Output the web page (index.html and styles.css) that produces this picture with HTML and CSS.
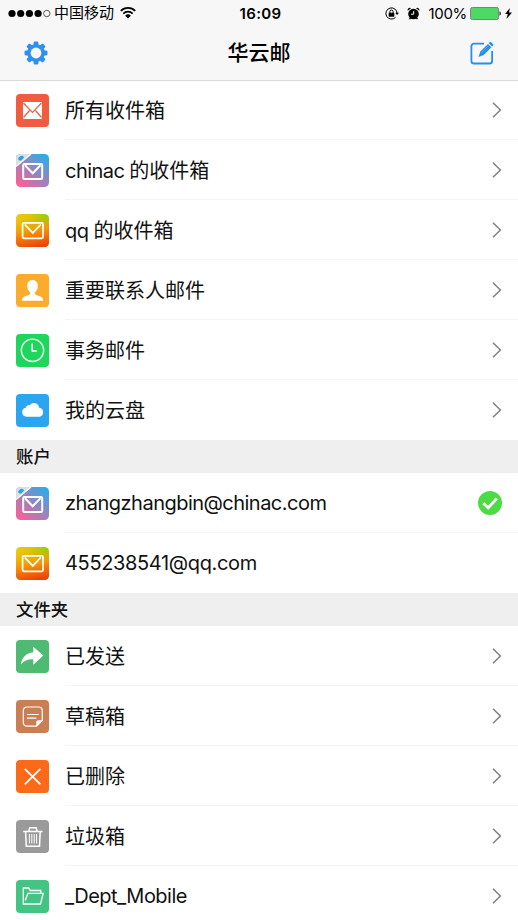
FILE: index.html
```html
<!DOCTYPE html>
<html lang="zh-CN">
<head>
<meta charset="utf-8">
<meta name="viewport" content="width=device-width, initial-scale=1">
<title>华云邮</title>
<link rel="stylesheet" href="styles.css">
</head>
<body>
<svg class="defs" width="0" height="0" aria-hidden="true">
  <defs>
    <linearGradient id="pinkblue" x1="0.1" y1="1" x2="0.9" y2="0">
      <stop offset="0" stop-color="#ff5e93"/><stop offset="0.5" stop-color="#9a83bd"/><stop offset="1" stop-color="#22b0ea"/>
    </linearGradient>
    <linearGradient id="sunbase" x1="0" y1="0" x2="1" y2="0">
      <stop offset="0" stop-color="#efc80c"/><stop offset="0.45" stop-color="#d9c60a"/><stop offset="1" stop-color="#7cd808"/>
    </linearGradient>
    <linearGradient id="sunfade" x1="0.4" y1="0" x2="0.6" y2="1">
      <stop offset="0.08" stop-color="#f5a800" stop-opacity="0"/><stop offset="0.5" stop-color="#f59a06"/><stop offset="1" stop-color="#ef4109"/>
    </linearGradient>
    <clipPath id="tile"><rect width="33" height="33" rx="4.5"/></clipPath>
    <symbol id="envelope" viewBox="0 0 33 33">
      <rect x="6.6" y="8.800" width="20.4" height="15.6" rx="1.3" fill="none" stroke="#fff" stroke-width="1.7"/>
      <path d="M8.8 10.500l8 8.400 8-8.400" fill="none" stroke="#fff" stroke-width="1.7"/>
    </symbol>
    <symbol id="chinac" viewBox="0 0 33 33">
      <g clip-path="url(#tile)">
        <rect width="33" height="33" fill="url(#pinkblue)"/>
        <path d="M0 0h14.500L0 12z" fill="#dedede"/>
        <path d="M15 0L0 12.500" stroke="#fff" stroke-width="1.3"/>
        <path d="M3 6.3a2 2 0 0 1 .4-3.400A2.700 2.700 0 0 1 8.100 3.500L5 6.800z" fill="#22a7ec"/>
      </g>
      <rect x="7.200" y="10" width="19" height="15" rx="1.300" fill="none" stroke="#fff" stroke-width="2"/>
      <path d="M9 11.300l7.700 7.900 7.700-7.900" fill="none" stroke="#fff" stroke-width="2"/>
    </symbol>
    <symbol id="qq" viewBox="0 0 33 33">
      <rect width="33" height="33" rx="4.5" fill="url(#sunbase)"/>
      <rect width="33" height="33" rx="4.5" fill="url(#sunfade)"/>
      <use href="#envelope"/>
    </symbol>
    <symbol id="chevron" viewBox="0 0 10 16">
      <path d="M1 .8L8.400 8 1 15.200" fill="none" stroke="#808080" stroke-width="1.500"/>
    </symbol>
  </defs>
</svg>
<div class="screen">
  <header class="top">
    <div class="status">
      <div class="carrier">
        <svg width="43" height="9" viewBox="0 0 43 9"><g><circle cx="4" cy="4.500" r="3.600"/><circle cx="12.700" cy="4.500" r="3.600"/><circle cx="21.400" cy="4.500" r="3.600"/><circle cx="30.100" cy="4.500" r="3.600"/></g><circle cx="38.800" cy="4.500" r="3.200" fill="none" stroke="#333" stroke-width=".8"/></svg>
        <span class="network">中国移动</span>
        <svg width="16" height="12" viewBox="0 0 16 12"><path d="M.8 3.900a10.300 10.300 0 0 1 14.400 0M3.300 6.600a6.700 6.700 0 0 1 9.400 0" fill="none" stroke="#000" stroke-width="1.700"/><path d="M5.200 8.700a4 4 0 0 1 5.600 0L8 11.500z"/></svg>
      </div>
      <div class="time">16:09</div>
      <div class="power">
        <svg width="14" height="13" viewBox="0 0 14 13"><path d="M12.100 6.500A5.600 5.600 0 1 0 10.500 10.400" fill="none" stroke="#000" stroke-width="1"/><path d="M10.200 5.700h3.800l-1.900 2.300z"/><rect x="3.700" y="5.700" width="5.600" height="4" rx=".4"/><path d="M4.900 6V4.600a1.600 1.600 0 0 1 3.200 0V6" fill="none" stroke="#000" stroke-width="1"/></svg>
        <svg class="alarm" width="13" height="13" viewBox="0 0 13 13"><circle cx="6.500" cy="7" r="5.300"/><path d="M.7 3.700A2.200 2.200 0 0 1 4 1.200zM9 1.200a2.200 2.200 0 0 1 3.300 2.500zM2.700 10.500l-.6 1.300.9.600 1.200-1zM10.300 10.500l.6 1.300-.9.600-1.200-1z"/><path d="M6.700 4v3.200H4" fill="none" stroke="#fff" stroke-width="1"/></svg>
        <span class="percent">100%</span>
        <svg width="31" height="13" viewBox="0 0 31 13"><rect x=".5" y=".5" width="28" height="12" rx="1.800" fill="#4cd964" stroke="#8b788b"/><path d="M29.500 4.300q1.400.5 1.400 2.200t-1.400 2.200z" fill="#222"/></svg>
        <svg class="bolt" width="7" height="11" viewBox="0 0 7 11"><path d="M4.900 0L0 6h2.800L1.400 11 7 4.500H4z"/></svg>
      </div>
    </div>
    <div class="nav">
      <svg width="24" height="24" viewBox="-12 -12 24 24"><g fill="#2d91ed"><g id="teeth"><rect x="-2.400" y="-11.500" width="4.800" height="23" rx="1.300"/><rect x="-11.500" y="-2.400" width="23" height="4.800" rx="1.300"/></g><use href="#teeth" transform="rotate(45)"/><circle r="8.900"/></g><circle r="5.400" fill="#f7f7f7"/></svg>
      <h1 class="title">华云邮</h1>
      <svg width="24" height="24" viewBox="0 0 24 24"><path d="M14 2.700H4A2.600 2.600 0 0 0 1.400 5.300v14.600a2.600 2.600 0 0 0 2.600 2.600h15.500a2.600 2.600 0 0 0 2.600-2.600V10" fill="none" stroke="#2191ee" stroke-width="1.800"/><g fill="#2191ee"><path d="M8.500 15.900l1.800-5.300 7.700-7.700 3.400 3.400-7.700 7.700z"/><path d="M18.700 2.200l1-1a1 1 0 0 1 1.400 0l2 2a1 1 0 0 1 0 1.400l-1 1z"/></g><path d="M11.300 11.900l7-7" stroke="#83c1f5" stroke-width=".6"/></svg>
    </div>
  </header>

  <ul class="list">
    <li class="row"><svg class="icon" viewBox="0 0 33 33"><rect width="33" height="33" rx="4" fill="#f15b40"/><rect x="7" y="8" width="19" height="17" rx="1" fill="#fff"/><path d="M7.500 9l9 9.300 9-9.300M7.500 23.500l6-7M25.500 23.500l-6-7" fill="none" stroke="#f15b40" stroke-width="1.200"/></svg><div class="body"><span class="label cjk">所有收件箱</span><svg class="chev"><use href="#chevron"/></svg></div></li>
    <li class="row"><svg class="icon"><use href="#chinac"/></svg><div class="body"><span class="label cjk"><span class="latin">chinac </span>的收件箱</span><svg class="chev"><use href="#chevron"/></svg></div></li>
    <li class="row"><svg class="icon"><use href="#qq"/></svg><div class="body"><span class="label cjk"><span class="latin">qq </span>的收件箱</span><svg class="chev"><use href="#chevron"/></svg></div></li>
    <li class="row"><svg class="icon" viewBox="0 0 33 33"><rect width="33" height="33" rx="4" fill="#fdab2b"/><path d="M16.500 6c3.400 0 5.300 2.500 5.300 6 0 2.700-1.100 4.700-2.700 6.300-.7 1.500.1 2.400 1.800 3 3.800 1.200 6 1.900 6.300 5.400H5.900c.3-3.500 2.500-4.200 6.300-5.400 1.700-.6 2.400-1.500 1.700-3-1.600-1.600-2.700-3.600-2.700-6.300 0-3.500 1.900-6 5.300-6z" fill="#fff"/></svg><div class="body"><span class="label cjk">重要联系人邮件</span><svg class="chev"><use href="#chevron"/></svg></div></li>
    <li class="row"><svg class="icon" viewBox="0 0 33 33"><rect width="33" height="33" rx="4" fill="#1ed65b"/><circle cx="16.500" cy="16.300" r="11.200" fill="none" stroke="#fff" stroke-width="1.300"/><path d="M16.200 9.500v7.600h4.600" fill="none" stroke="#fff" stroke-width="1.500"/></svg><div class="body"><span class="label cjk">事务邮件</span><svg class="chev"><use href="#chevron"/></svg></div></li>
    <li class="row"><svg class="icon" viewBox="0 0 33 33"><rect width="33" height="33" rx="4" fill="#2ca5f1"/><path d="M10.400 22.700a4.500 4.500 0 0 1-.6-8.900 3.300 3.300 0 0 1 4.200-2.700c2.500-3.700 8.500-2.300 9.200 2.600a4.600 4.600 0 0 1 .5 9z" fill="#fff"/></svg><div class="body"><span class="label cjk">我的云盘</span><svg class="chev"><use href="#chevron"/></svg></div></li>
  </ul>

  <h2 class="section">账户</h2>
  <ul class="list">
    <li class="row"><svg class="icon"><use href="#chinac"/></svg><div class="body"><span class="label address">zhangzhangbin@chinac.com</span><svg class="check" viewBox="0 0 24 24"><circle cx="12" cy="12" r="12" fill="#4cdb45"/><path d="M5.300 12.200l4.900 4.600 8.600-9.300" fill="none" stroke="#fff" stroke-width="2.800"/></svg></div></li>
    <li class="row"><svg class="icon"><use href="#qq"/></svg><div class="body"><span class="label digits">455238541@qq.com</span></div></li>
  </ul>

  <h2 class="section">文件夹</h2>
  <ul class="list">
    <li class="row"><svg class="icon" viewBox="0 0 33 33"><rect width="33" height="33" rx="4" fill="#4fba71"/><path d="M17.300 6.800l10 8.700-10 9.200v-5.300c-5-.3-9 .9-12.300 5.200.5-7.200 5.500-11.700 12.300-12.300z" fill="#fff"/></svg><div class="body"><span class="label cjk">已发送</span><svg class="chev"><use href="#chevron"/></svg></div></li>
    <li class="row"><svg class="icon" viewBox="0 0 33 33"><rect width="33" height="33" rx="4" fill="#ca7e52"/><path d="M20.500 26.200H10.800a3.500 3.500 0 0 1-3.500-3.500V10.500A3.500 3.500 0 0 1 10.800 7h12a3.500 3.500 0 0 1 3.500 3.500v9.900z" fill="none" stroke="#fff" stroke-width="1.200"/><path d="M20.300 26.500v-4.200q0-2 2-2h4.200z" fill="#fff"/><path d="M11 14.500h11.800M11 18.200h9.500" stroke="#fff" stroke-width="1.200"/></svg><div class="body"><span class="label cjk">草稿箱</span><svg class="chev"><use href="#chevron"/></svg></div></li>
    <li class="row"><svg class="icon" viewBox="0 0 33 33"><rect width="33" height="33" rx="4" fill="#fa6a19"/><path d="M8.800 8.800L24.400 24.400M24.400 8.800L8.800 24.400" stroke="#fff" stroke-width="1.800"/></svg><div class="body"><span class="label cjk">已删除</span><svg class="chev"><use href="#chevron"/></svg></div></li>
    <li class="row"><svg class="icon" viewBox="0 0 33 33"><rect width="33" height="33" rx="4" fill="#9a9a9a"/><path d="M7.200 11.500h19.300M9.600 12l.7 14.300h13.200l.7-14.300M12.800 11l1-3.200h6.300l1 3.200" fill="none" stroke="#fff" stroke-width="1.500"/><path d="M13.400 14v9.500M15.800 14v9.500M18.200 14v9.500M20.600 14v9.500" stroke="#fff" stroke-width="1"/></svg><div class="body"><span class="label cjk">垃圾箱</span><svg class="chev"><use href="#chevron"/></svg></div></li>
    <li class="row"><svg class="icon" viewBox="0 0 33 33"><rect width="33" height="33" rx="4" fill="#43c384"/><path d="M24.800 13.300v-2.800H14.200L12.700 8H7.300v16h17.200l2.700-10.700H12L9.200 20.500" fill="none" stroke="#fff" stroke-width="1.300"/></svg><div class="body"><span class="label address">_Dept_Mobile</span><svg class="chev"><use href="#chevron"/></svg></div></li>
  </ul>
</div>
</body>
</html>
```
FILE: styles.css
```css
* { box-sizing: border-box; }
body, ul, h1, h2 { margin: 0; padding: 0; }
body {
  background: #fff;
  color: #111;
  font-family: Inter, "Noto Sans CJK SC", sans-serif;
  overflow: hidden;
}
svg { display: block; flex: none; }
.defs { position: absolute; }
.screen { width: 518px; height: 920px; overflow: hidden; }
.top {
  height: 80px;
  background: #f7f7f7;
  box-shadow: 0 1px 0 #dadada;
}
.status {
  display: grid;
  grid-template-columns: 1fr auto 1fr;
  align-items: center;
  height: 26px;
  padding: 0 6px 0 8px;
  color: #000;
}
.carrier { display: flex; align-items: center; }
.network { margin: 0 6px 0 3px; font-size: 15px; line-height: 24px; }
.time { padding-left: 1px; font-size: 15px; font-weight: 600; letter-spacing: 0.4px; }
.power { display: flex; align-items: center; justify-content: flex-end; }
.alarm { margin-left: 8px; }
.percent { margin: 0 3px 0 8px; font-size: 15px; letter-spacing: -0.3px; }
.bolt { margin-left: 4px; }
.nav {
  display: flex;
  align-items: center;
  justify-content: space-between;
  height: 54px;
  padding: 0 24px;
}
.title { font-size: 21px; line-height: 30px; font-weight: 500; color: #000; }
.list { list-style: none; }
.row {
  display: flex;
  align-items: center;
  height: 60px;
  padding-left: 16px;
}
.icon { width: 33px; height: 33px; }
.body {
  display: flex;
  align-items: center;
  justify-content: space-between;
  flex: 1;
  height: 60px;
  margin-left: 16px;
  padding-right: 16px;
  border-bottom: 1px solid #f4f4f4;
}
.row:last-child .body { border-bottom-color: transparent; }
.label { font-size: 20px; line-height: 30px; white-space: nowrap; }
.cjk { padding-top: 2px; }
.latin { letter-spacing: -0.55px; }
.address { letter-spacing: -0.52px; }
.digits { letter-spacing: -0.35px; }
.chev { width: 10px; height: 16px; }
.check { width: 24px; height: 24px; }
.section {
  height: 33px;
  padding-left: 16px;
  background: #efefef;
  font-size: 17.4px;
  line-height: 34px;
  font-weight: 500;
}
```
